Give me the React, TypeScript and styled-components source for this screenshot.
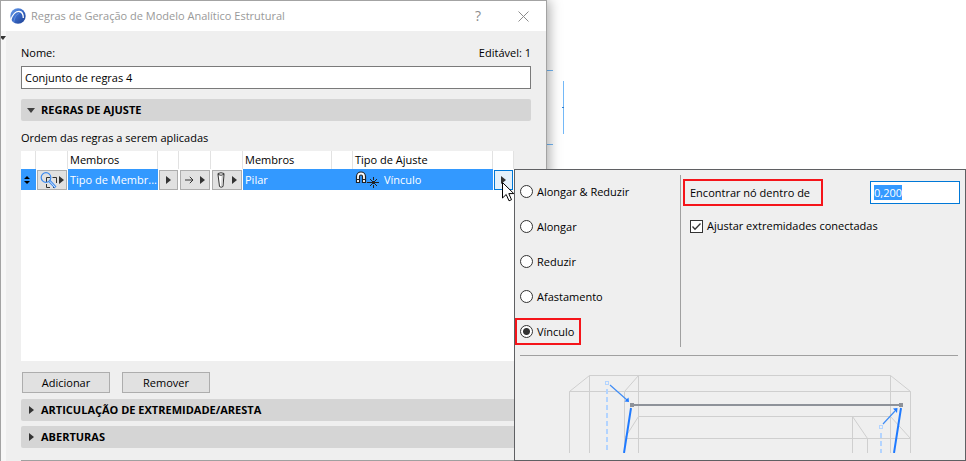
import React, { useEffect, useRef } from "react";
import styled, { createGlobalStyle } from "styled-components";

const Global = createGlobalStyle`
  *, *::before, *::after { box-sizing: border-box; }
  html, body { margin: 0; background: #fff; }
  body { overflow: hidden; }
  body, button, input {
    font-family: "Open Sans", "Noto Sans", sans-serif;
    font-size: 11px;
    line-height: 16px;
    color: #000;
  }
`;

const Page = styled.main`
  display: flex;
  align-items: stretch;
  height: 100vh;
  overflow: hidden;
`;

const Dialog = styled.section`
  position: relative;
  z-index: 1;
  flex: 0 1 547px;
  min-width: 0;
  display: flex;
  flex-direction: column;
  border: 1px solid #a3a3a3;
  border-bottom: 0;
  background: #efefef;
  box-shadow: 2px 0 12px rgba(0, 0, 0, 0.35);
`;

const TitleBar = styled.header`
  display: flex;
  align-items: center;
  height: 30px;
  flex: none;
  padding: 0 17px 0 9px;
  background: #fff;
`;

const Title = styled.h1`
  flex: 1;
  margin: 0 0 0 5px;
  font-size: 11px;
  font-weight: 400;
  color: #999;
`;

const TitleButton = styled.button`
  display: flex;
  align-items: center;
  justify-content: center;
  width: 12px;
  height: 24px;
  margin-left: 33px;
  padding: 0;
  border: 0;
  background: none;
  font-size: 14px;
  color: #8c8c8c;
`;

const Body = styled.div`
  display: flex;
  flex: 1;
`;

const Gutter = styled.div`
  display: flex;
  align-items: flex-start;
  width: 5px;
  flex: none;
  padding-top: 5px;
  background: #f7f7f7;
`;

const Content = styled.div`
  flex: 1;
  min-width: 0;
  padding: 14px 15px 0;
`;

const NameRow = styled.div`
  display: flex;
  justify-content: space-between;
  margin-bottom: 5px;
`;

const TextBox = styled.input`
  display: block;
  width: 100%;
  height: 23px;
  padding: 0 3px;
  border: 1px solid #7a7a7a;
  border-radius: 0;
  background: #fff;
  outline: none;
`;

const SectionBar = styled.button<{ $gap: number }>`
  display: flex;
  align-items: center;
  gap: 6px;
  width: 100%;
  height: 22px;
  margin-top: ${(p) => p.$gap}px;
  padding: 0 6px;
  border: 0;
  border-radius: 2px;
  background: #d5d5d5;
  font-weight: 700;
`;

const BarIcon = styled.span`
  display: flex;
  justify-content: center;
  width: 8px;
`;

const Caption = styled.p`
  margin: 9px 0 5px;
`;

const ListPane = styled.div`
  width: calc(100% - 17px);
  height: 210px;
  background: #fff;
`;

const RuleTable = styled.table`
  width: 100%;
  table-layout: fixed;
  border-collapse: separate;
  border-spacing: 0;
`;

const Col = styled.col<{ $w?: number }>`
  width: ${(p) => (p.$w ? `${p.$w}px` : "auto")};
`;

const HeadCell = styled.th`
  height: 18px;
  padding: 0 2px;
  border-right: 1px solid #e2e2e2;
  font-weight: 400;
  line-height: 16px;
  text-align: left;
  white-space: nowrap;
`;

const Cell = styled.td<{ $selected?: boolean }>`
  height: 21px;
  padding: ${(p) => (p.$selected ? "0 2px" : "1px 1px 0")};
  background: ${(p) => (p.$selected ? "#3399ff" : "#fff")};
  color: #fff;
  line-height: 20px;
  white-space: nowrap;
`;

const OrderCell = styled(Cell)`
  padding: 0 3px;
`;

const CellText = styled.span`
  display: flex;
  align-items: center;
  gap: 4px;
`;

const CellButton = styled.button<{ $active?: boolean }>`
  display: flex;
  align-items: center;
  justify-content: space-around;
  width: 100%;
  height: 20px;
  padding: 0 1px;
  border: 1px solid ${(p) => (p.$active ? "#0078d7" : "#adadad")};
  background: ${(p) => (p.$active ? "#e5f1fb" : "#e1e1e1")};
`;

const Anchor = styled.div`
  position: relative;
  margin: -1px -1px 0;
  padding: 1px 1px 0;
`;

const Pointer = styled.svg`
  position: absolute;
  z-index: 3;
  left: 9px;
  top: 13px;
`;

const Actions = styled.div`
  display: flex;
  gap: 12px;
  padding: 11px 1px 0;
`;

const ActionButton = styled.button`
  width: 88px;
  height: 21px;
  padding: 0;
  border: 1px solid #adadad;
  background: #e1e1e1;
  line-height: 18px;
`;

const FooterRule = styled.hr`
  margin: 12px 0 0;
  border: 0;
  border-top: 1px solid #a0a0a0;
`;

const Popover = styled.div`
  position: absolute;
  z-index: 2;
  left: 100%;
  top: 0;
  width: 452px;
  padding: 5px 6px 7px 5px;
  border: 1px solid #5f6063;
  background: #efefef;
  color: #000;
  line-height: 16px;
`;

const Options = styled.div`
  display: flex;
  min-height: 172px;
`;

const RadioList = styled.div`
  display: flex;
  flex-direction: column;
  gap: 8px;
  width: 161px;
  padding-top: 3px;
  border-right: 1px solid #a0a0a0;
`;

const Marked = styled.span<{ $on?: boolean }>`
  display: flex;
  align-items: center;
  align-self: flex-start;
  height: 27px;
  margin-left: -5px;
  padding: 0 4px 0 3px;
  border: 2px solid ${(p) => (p.$on ? "#f5141a" : "transparent")};
`;

const ChoiceLabel = styled.label`
  display: flex;
  align-items: center;
  gap: 4px;
`;

const Radio = styled.input`
  appearance: none;
  width: 13px;
  height: 13px;
  margin: 0;
  border: 1px solid #333;
  border-radius: 50%;
  background: #fff;
  &:checked {
    background: radial-gradient(circle, #333 0 3px, #fff 4px);
  }
`;

const Settings = styled.div`
  flex: 1;
  padding: 4px 0 0 7px;
`;

const SettingRow = styled.div`
  display: flex;
  align-items: center;
  justify-content: space-between;
`;

const SettingLabel = styled(Marked)`
  width: 140px;
  padding: 0 5px;
  white-space: nowrap;
`;

const ValueBox = styled(TextBox)`
  width: 90px;
  margin-right: -1px;
  border-color: #0078d7;
  &::selection {
    background: #3399ff;
    color: #fff;
  }
`;

const CheckLabel = styled(ChoiceLabel)`
  margin: 12px 0 0 2px;
`;

const CheckFrame = styled.span`
  display: grid;
  width: 13px;
  height: 13px;
  > * { grid-area: 1 / 1; }
  > svg { pointer-events: none; }
`;

const Check = styled.input`
  appearance: none;
  width: 13px;
  height: 13px;
  margin: 0;
  border: 1px solid #333;
  background: #fff;
  & + svg { visibility: hidden; }
  &:checked + svg { visibility: visible; z-index: 1; }
`;

const Rule = styled.hr`
  margin: 8px 1px 0 0;
  border: 0;
  border-top: 1px solid #a0a0a0;
`;

const Diagram = styled.svg`
  display: block;
  margin: 19px auto 0;
`;

const Canvas = styled.div`
  flex: 1;
  padding-top: 70px;
`;

const Right = () => (
  <svg width="5" height="8" viewBox="0 0 5 8" aria-hidden="true">
    <path d="M0 0L5 4L0 8Z" fill="#333" />
  </svg>
);

const Down = () => (
  <svg width="8" height="5" viewBox="0 0 8 5" aria-hidden="true">
    <path d="M0 0H8L4 5Z" fill="#404040" />
  </svg>
);

const Logo = () => (
  <svg width="16" height="16" viewBox="0 0 16 16" aria-hidden="true">
    <defs>
      <linearGradient id="logoFill" x1="0" y1="0" x2="1" y2="1">
        <stop offset="0" stopColor="#6ba0ee" />
        <stop offset="0.5" stopColor="#3767c4" />
        <stop offset="1" stopColor="#1d3e90" />
      </linearGradient>
    </defs>
    <circle cx="8" cy="8" r="7.7" fill="url(#logoFill)" />
    <path d="M0.800 12C2.500 6.500 6 3.200 9.300 3.500C12.400 3.800 13.300 6.500 13.300 10" fill="none" stroke="#fff" strokeWidth="1.3" />
    <path d="M3.700 14.300C4.500 9.700 6.400 6 9 5.600" fill="none" stroke="#6d98e6" strokeWidth="0.800" />
  </svg>
);

const SearchIcon = () => (
  <svg width="18" height="18" viewBox="0 0 18 18" fill="none" aria-hidden="true">
    <path d="M6.500 11V6.500H10M12.500 6.500H16.500V12M6.500 13V16.500H10M13 16.500H14" stroke="#333" />
    <circle cx="6" cy="6.500" r="4.800" stroke="#3c8af0" strokeWidth="1.200" />
    <path d="M9.500 10L15.500 16.500" stroke="#3c8af0" strokeWidth="2.600" />
    <path d="M9.800 10.300L15.200 16.200" stroke="#dbe9fb" />
  </svg>
);

const ArrowIcon = () => (
  <svg width="9" height="8" viewBox="0 0 9 8" fill="none" stroke="#333" aria-hidden="true">
    <path d="M0 4H8M4.800 0.800L8 4L4.800 7.200" />
  </svg>
);

const ColumnIcon = () => (
  <svg width="8" height="16" viewBox="0 0 8 16" aria-hidden="true">
    <path d="M1 2.500V1.500Q4 0 7 1.500V2.500L6 14.500Q4 16 2.500 14.500Z" fill="#fff" stroke="#333" />
    <path d="M1 2.500Q4 4 7 2.500" fill="none" stroke="#333" />
    <path d="M5.300 4L4.800 14" stroke="#b8b8b8" />
  </svg>
);

const OrderIcon = () => (
  <svg width="6" height="8" viewBox="0 0 6 8" aria-hidden="true">
    <path d="M0 3L3 0L6 3ZM0 5H6L3 8Z" fill="#000" />
  </svg>
);

const MagnetIcon = () => (
  <svg width="25" height="18" viewBox="0 0 25 18" fill="none" aria-hidden="true">
    <path
      d="M1.500 11.500V5.500a4.500 4.500 0 0 1 9 0V11.500H7.500V5.500a1.500 1.500 0 0 0 -3 0V11.500Z"
      fill="#fff"
      stroke="#222"
      strokeWidth="1.200"
    />
    <path d="M1.500 8.500H4.500M7.500 8.500H10.500" stroke="#222" />
    <path d="M12 11.500H24M18.500 6V9M18.500 14V17M15 8L17 10M22 8L20 10M15 15L17 13M22 15L20 13" stroke="#222" />
    <rect x="17" y="10" width="3" height="3" fill="#222" />
  </svg>
);

const JointDiagram = () => (
  <Diagram width="342" height="78" viewBox="0 0 342 78" fill="none" role="img" aria-label="Vínculo">
    <g stroke="#cfcfcf">
      <path d="M20.500 78V0.500H321.500V78M0.500 78V16.500H341.500V78M55.500 16.500V78M69.500 0.500V78" />
      <path d="M69.500 41.500H321.500M55.500 63.500H341.500M283.500 78V41.500M298.500 63.500V78" />
      <path d="M0.500 16.500L20.500 0.500M55.500 16.500L69.500 0.500M55.500 63.500L69.500 41.500M321.500 0.500L341.500 16.500M283.500 41.500L298.500 63.500M321.500 41.500L341.500 63.500" />
    </g>
    <g stroke="#b3d4ff">
      <path d="M38 14V78" strokeWidth="2" strokeDasharray="5 3" />
      <path d="M312 58V78" strokeWidth="2" strokeDasharray="5 3" />
      <rect x="36.500" y="6.500" width="3" height="3" />
      <rect x="310.500" y="50.500" width="3" height="3" />
    </g>
    <path d="M62 33L55 78M332 33L325 78" stroke="#1f7aff" strokeWidth="2" />
    <path d="M41 10L58 25M314 49L326 36" stroke="#3f8cf5" strokeWidth="1.200" />
    <path d="M60 27L55.500 26.500L59.500 22.500ZM328.500 33L328 38L324 33.500Z" fill="#1f7aff" />
    <path d="M63 30H332" stroke="#8e9299" strokeWidth="2" />
    <path d="M61 28h4v4h-4zM330 28h4v4h-4z" fill="#8e9299" />
  </Diagram>
);

const CHOICES = ["Alongar & Reduzir", "Alongar", "Reduzir", "Afastamento", "Vínculo"];
const COLUMNS: { width?: number; label?: string }[] = [
  { width: 15 },
  { width: 32 },
  { width: 90, label: "Membros" },
  { width: 21 },
  { width: 32 },
  { width: 32 },
  { width: 89, label: "Membros" },
  { width: 21 },
  { label: "Tipo de Ajuste" },
  { width: 21 },
];

function AdjustmentPopover() {
  const value = useRef<HTMLInputElement>(null);
  useEffect(() => {
    value.current?.focus({ preventScroll: true });
    value.current?.select();
  }, []);

  return (
    <Popover>
      <Options>
        <RadioList role="radiogroup" aria-label="Tipo de Ajuste">
          {CHOICES.map((choice) => (
            <Marked key={choice} $on={choice === "Vínculo"}>
              <ChoiceLabel>
                <Radio type="radio" name="adjustment" defaultChecked={choice === "Vínculo"} />
                {choice}
              </ChoiceLabel>
            </Marked>
          ))}
        </RadioList>
        <Settings>
          <SettingRow>
            <SettingLabel $on>
              <label htmlFor="distance">Encontrar nó dentro de</label>
            </SettingLabel>
            <ValueBox id="distance" ref={value} defaultValue="0,200" />
          </SettingRow>
          <CheckLabel>
            <CheckFrame>
              <Check type="checkbox" defaultChecked />
              <svg width="13" height="13" viewBox="0 0 13 13" fill="none" stroke="#333" strokeWidth="1.300">
                <path d="M2.500 6.500L5 9.200L10.500 3.500" />
              </svg>
            </CheckFrame>
            Ajustar extremidades conectadas
          </CheckLabel>
        </Settings>
      </Options>
      <Rule />
      <JointDiagram />
    </Popover>
  );
}

export default function App() {
  return (
    <>
      <Global />
      <Page>
        <Dialog>
          <TitleBar>
            <Logo />
            <Title>Regras de Geração de Modelo Analítico Estrutural</Title>
            <TitleButton aria-label="Ajuda">?</TitleButton>
            <TitleButton aria-label="Fechar">
              <svg width="11" height="11" viewBox="0 0 11 11" stroke="#8c8c8c">
                <path d="M0.500 0.500L10.500 10.500M10.500 0.500L0.500 10.500" />
              </svg>
            </TitleButton>
          </TitleBar>
          <Body>
            <Gutter>
              <svg width="5" height="4" viewBox="0 0 5 4" aria-hidden="true">
                <path d="M0 0H5L2 4L0 2Z" fill="#333" />
              </svg>
            </Gutter>
            <Content>
              <NameRow>
                <label htmlFor="name">Nome:</label>
                <span>Editável: 1</span>
              </NameRow>
              <TextBox id="name" defaultValue="Conjunto de regras 4" />
              <SectionBar $gap={10} aria-expanded="true">
                <BarIcon>
                  <Down />
                </BarIcon>
                REGRAS DE AJUSTE
              </SectionBar>
              <Caption>Ordem das regras a serem aplicadas</Caption>
              <ListPane>
                <RuleTable>
                  <colgroup>
                    {COLUMNS.map((c, i) => (
                      <Col key={i} $w={c.width} />
                    ))}
                  </colgroup>
                  <thead>
                    <tr>
                      {COLUMNS.map((c, i) => (
                        <HeadCell key={i}>{c.label}</HeadCell>
                      ))}
                    </tr>
                  </thead>
                  <tbody>
                    <tr>
                      <OrderCell $selected>
                        <CellText>
                          <OrderIcon />
                        </CellText>
                      </OrderCell>
                      <Cell>
                        <CellButton aria-label="Tipo de membro">
                          <SearchIcon />
                          <Right />
                        </CellButton>
                      </Cell>
                      <Cell $selected>Tipo de Membr...</Cell>
                      <Cell>
                        <CellButton aria-label="Membros">
                          <Right />
                        </CellButton>
                      </Cell>
                      <Cell>
                        <CellButton aria-label="Direção">
                          <ArrowIcon />
                          <Right />
                        </CellButton>
                      </Cell>
                      <Cell>
                        <CellButton aria-label="Elemento">
                          <ColumnIcon />
                          <Right />
                        </CellButton>
                      </Cell>
                      <Cell $selected>Pilar</Cell>
                      <Cell $selected />
                      <Cell $selected>
                        <CellText>
                          <MagnetIcon />
                          Vínculo
                        </CellText>
                      </Cell>
                      <Cell>
                        <Anchor>
                          <CellButton $active aria-label="Tipo de ajuste">
                            <Right />
                          </CellButton>
                          <AdjustmentPopover />
                          <Pointer width="13" height="20" viewBox="0 0 13 20" aria-hidden="true">
                            <path
                              d="M0.500 0.500V16L4.200 12.500L7 18.800L9.500 17.700L6.800 11.600H11.800Z"
                              fill="#fff"
                              stroke="#000"
                            />
                          </Pointer>
                        </Anchor>
                      </Cell>
                    </tr>
                  </tbody>
                </RuleTable>
              </ListPane>
              <Actions>
                <ActionButton>Adicionar</ActionButton>
                <ActionButton>Remover</ActionButton>
              </Actions>
              <SectionBar $gap={6} aria-expanded="false">
                <BarIcon>
                  <Right />
                </BarIcon>
                ARTICULAÇÃO DE EXTREMIDADE/ARESTA
              </SectionBar>
              <SectionBar $gap={5} aria-expanded="false">
                <BarIcon>
                  <Right />
                </BarIcon>
                ABERTURAS
              </SectionBar>
              <FooterRule />
            </Content>
          </Body>
        </Dialog>
        <Canvas>
          <svg width="20" height="76" viewBox="0 0 20 76" fill="none" aria-hidden="true">
            <path d="M0 0.500H6M0 74.500H6M16.500 11V64" stroke="#74b9f8" />
            <path d="M15 37.500H17" stroke="#2f7fd0" />
          </svg>
        </Canvas>
      </Page>
    </>
  );
}
